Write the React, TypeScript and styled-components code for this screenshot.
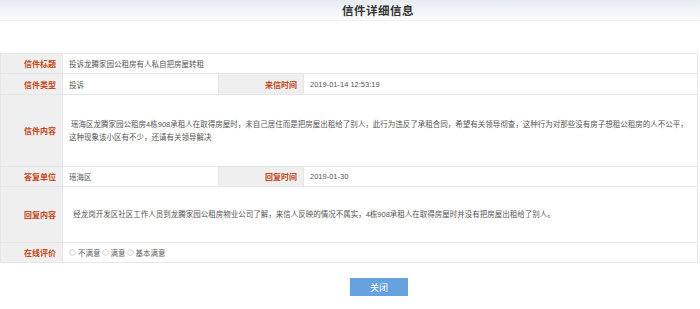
import { createGlobalStyle, styled } from "styled-components";

const GlobalStyle = createGlobalStyle`
body{
    margin: 0;
    background: #ffffff;
    font-family: "Liberation Sans", "Noto Sans CJK SC", sans-serif;
}
`

const Header = styled.div`
height: 20px;
display: flex;
align-items: center;
justify-content: center;
padding-left: 56px;
background: linear-gradient(#e6ebf2, #fbfcfd);
border-bottom: 1px solid #f1f3f6;
h1{
    margin: 0;
    font-size: 11.5px;
    font-weight: bold;
    color: #333333;
    letter-spacing: 0.5px;
}
`

const Page = styled.div`
width: 700px;
height: 309px;
`

const Table = styled.table`
margin-top: 32px;
width: 698px;
border-collapse: collapse;
table-layout: fixed;
font-size: 7.5px;
td{
    border: 1px solid #e6e6e6;
    padding: 0 6px;
    color: #555555;
}
`

const Label = styled.td`
background: #efefef;
text-align: right;
color: #c4461a !important;
font-weight: bold;
font-size: 8px;
padding-right: 6px !important;
`

const Row = styled.tr<{ h: number }>`
height: ${props => props.h}px;
`

const Content = styled.td`
line-height: 13px;
p{
    margin: 0;
}
`

const Radios = styled.div`
display: flex;
align-items: center;
gap: 1px;
label{
    display: flex;
    align-items: center;
    gap: 2px;
    color: #666666;
}
span{
    width: 7px;
    height: 7px;
    border-radius: 50%;
    border: 1px solid #d8d8d8;
    background: #f6f6f6;
    box-sizing: border-box;
}
`

const Footer = styled.div`
display: flex;
justify-content: center;
padding-top: 15px;
padding-left: 58px;
`

const CloseButton = styled.button`
width: 58px;
height: 18px;
border: none;
background: #67a1de;
color: #ffffff;
font-size: 9px;
font-family: inherit;
padding: 0;
`

const App = () => {
    return (
        <Page>
            <GlobalStyle />
            <Header><h1>信件详细信息</h1></Header>
            <Table>
                <colgroup>
                    <col style={{ width: 62 }} />
                    <col style={{ width: 156 }} />
                    <col style={{ width: 85 }} />
                    <col />
                </colgroup>
                <tbody>
                    <Row h={20}>
                        <Label>信件标题</Label>
                        <td colSpan={3}>投诉龙腾家园公租房有人私自把房屋转租</td>
                    </Row>
                    <Row h={21}>
                        <Label>信件类型</Label>
                        <td>投诉</td>
                        <Label>来信时间</Label>
                        <td>2019-01-14 12:53:19</td>
                    </Row>
                    <Row h={72}>
                        <Label>信件内容</Label>
                        <Content colSpan={3}>
                            <p>&nbsp;瑶海区龙腾家园公租房4栋908承租人在取得房屋时，未自己居住而是把房屋出租给了别人，此行为违反了承租合同，希望有关领导彻查，这种行为对那些没有房子想租公租房的人不公平，</p>
                            <p>这种现象该小区有不少，还请有关领导解决</p>
                        </Content>
                    </Row>
                    <Row h={20}>
                        <Label>答复单位</Label>
                        <td>瑶海区</td>
                        <Label>回复时间</Label>
                        <td>2019-01-30</td>
                    </Row>
                    <Row h={56}>
                        <Label>回复内容</Label>
                        <Content colSpan={3}>
                            <p>&nbsp;&nbsp;经龙岗开发区社区工作人员到龙腾家园公租房物业公司了解，来信人反映的情况不属实，4栋908承租人在取得房屋时并没有把房屋出租给了别人。</p>
                        </Content>
                    </Row>
                    <Row h={20}>
                        <Label>在线评价</Label>
                        <td colSpan={3}>
                            <Radios>
                                <label><span />不满意</label>
                                <label><span />满意</label>
                                <label><span />基本满意</label>
                            </Radios>
                        </td>
                    </Row>
                </tbody>
            </Table>
            <Footer>
                <CloseButton>关闭</CloseButton>
            </Footer>
        </Page>
    )
}

export default App
